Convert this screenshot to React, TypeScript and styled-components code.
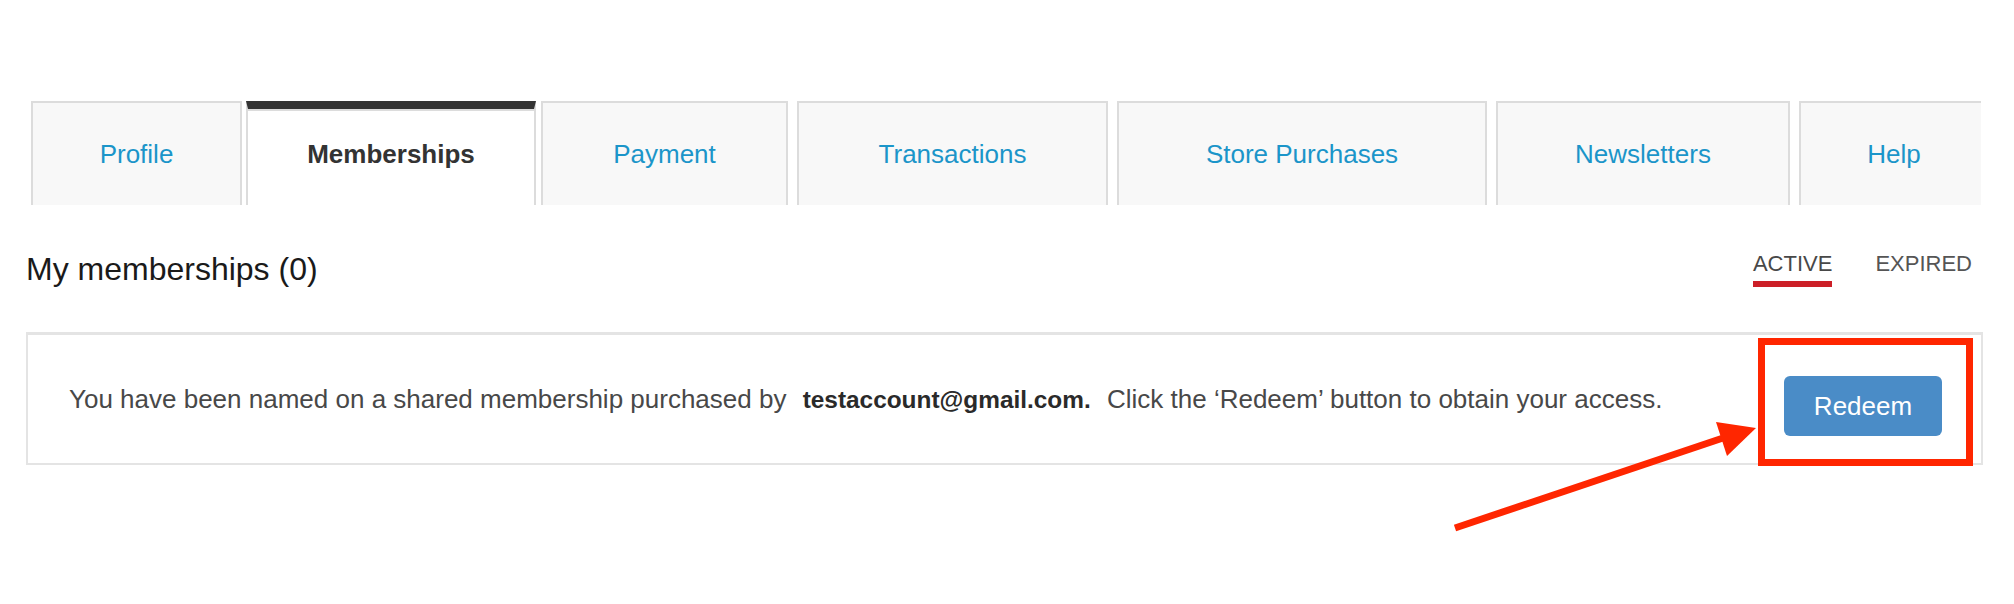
import React from 'react'
import styled, { createGlobalStyle } from 'styled-components'

const GlobalStyle = createGlobalStyle`
  html, body {
    margin: 0;
    padding: 0;
    background: #ffffff;
  }
  body {
    font-family: 'Liberation Sans', Arial, Helvetica, sans-serif;
    -webkit-font-smoothing: antialiased;
  }
`

const Page = styled.div`
  position: relative;
  box-sizing: border-box;
  width: 1983px;
  min-height: 604px;
  padding: 101px 0 0 26px;
`

const TabStrip = styled.nav`
  display: flex;
  align-items: stretch;
  height: 104px;
  width: 1950px;
  margin-left: 5px;
  overflow: hidden;
`

const Tab = styled.div<{ $w: number; $gap: number; $active?: boolean }>`
  flex: 0 0 auto;
  box-sizing: border-box;
  width: ${(p) => p.$w}px;
  margin-right: ${(p) => p.$gap}px;
  display: flex;
  align-items: center;
  justify-content: center;
  border: 2px solid #dcdcdc;
  border-bottom: none;
  border-top: ${(p) => (p.$active ? '8px solid #333333' : '2px solid #dcdcdc')};
  box-shadow: ${(p) => (p.$active ? 'inset 0 2px 0 #dcdcdc' : 'none')};
  background: ${(p) => (p.$active ? '#ffffff' : '#f8f8f8')};
  color: ${(p) => (p.$active ? '#333333' : '#1b95c9')};
  font-size: 26px;
  font-weight: ${(p) => (p.$active ? 700 : 400)};
  padding-bottom: ${(p) => (p.$active ? '6px' : '0')};
  cursor: pointer;
`

const HeaderRow = styled.div`
  display: flex;
  justify-content: space-between;
  align-items: flex-start;
  margin-top: 48px;
`

const Title = styled.h2`
  margin: 0;
  font-size: 32px;
  line-height: 32px;
  font-weight: 400;
  color: #1a1a1a;
`

const Filters = styled.div`
  display: flex;
  gap: 43px;
  margin-right: 11px;
`

const Filter = styled.div<{ $active?: boolean }>`
  font-size: 22px;
  line-height: 22px;
  color: ${(p) => (p.$active ? '#484848' : '#555555')};
  &::after {
    content: '';
    display: block;
    height: 6px;
    margin-top: 6px;
    background: ${(p) => (p.$active ? '#cc1f27' : 'transparent')};
  }
`

const Card = styled.div`
  box-sizing: border-box;
  height: 133px;
  margin-top: 45px;
  display: flex;
  align-items: center;
  justify-content: space-between;
  border: 2px solid #e4e4e4;
  border-top-width: 3px;
  padding: 0 39px 0 41px;
`

const Message = styled.p`
  margin: 0;
  font-size: 26px;
  line-height: 26px;
  color: #484848;
  white-space: nowrap;
`

const Email = styled.strong`
  font-size: 24.4px;
  font-weight: 700;
  color: #2a2a2a;
  margin: 0 9px;
`

const RedeemButton = styled.button`
  width: 158px;
  height: 60px;
  margin-top: 14px;
  border: none;
  border-radius: 6px;
  background: #4a8cc7;
  color: #ffffff;
  font-family: inherit;
  font-size: 26px;
  cursor: pointer;
`

const Annotation = styled.svg`
  position: absolute;
  left: 0;
  top: 0;
  pointer-events: none;
`

const tabs = [
  { label: 'Profile', w: 211, gap: 4 },
  { label: 'Memberships', w: 290, gap: 5, active: true },
  { label: 'Payment', w: 247, gap: 9 },
  { label: 'Transactions', w: 311, gap: 9 },
  { label: 'Store Purchases', w: 370, gap: 9 },
  { label: 'Newsletters', w: 294, gap: 9 },
  { label: 'Help', w: 190, gap: 0 },
]

const App = () => {
  return (
    <Page>
      <GlobalStyle />
      <TabStrip>
        {tabs.map((t) => (
          <Tab key={t.label} $w={t.w} $gap={t.gap} $active={t.active}>
            {t.label}
          </Tab>
        ))}
      </TabStrip>

      <HeaderRow>
        <Title>My memberships (0)</Title>
        <Filters>
          <Filter $active>ACTIVE</Filter>
          <Filter>EXPIRED</Filter>
        </Filters>
      </HeaderRow>

      <Card>
        <Message>
          You have been named on a shared membership purchased by <Email>testaccount@gmail.com.</Email> Click the
          ‘Redeem’ button to obtain your access.
        </Message>
        <RedeemButton>Redeem</RedeemButton>
      </Card>

      {/* red callout drawn over the page */}
      <Annotation width='2014' height='604' viewBox='0 0 2014 604'>
        <rect x='1761.5' y='341.5' width='208' height='121' fill='none' stroke='#ff2600' strokeWidth='7' />
        <line x1='1455' y1='528' x2='1726' y2='437' stroke='#ff2600' strokeWidth='7' />
        <polygon points='1716,422 1756,428 1727,456' fill='#ff2600' />
      </Annotation>
    </Page>
  )
}

export default App
